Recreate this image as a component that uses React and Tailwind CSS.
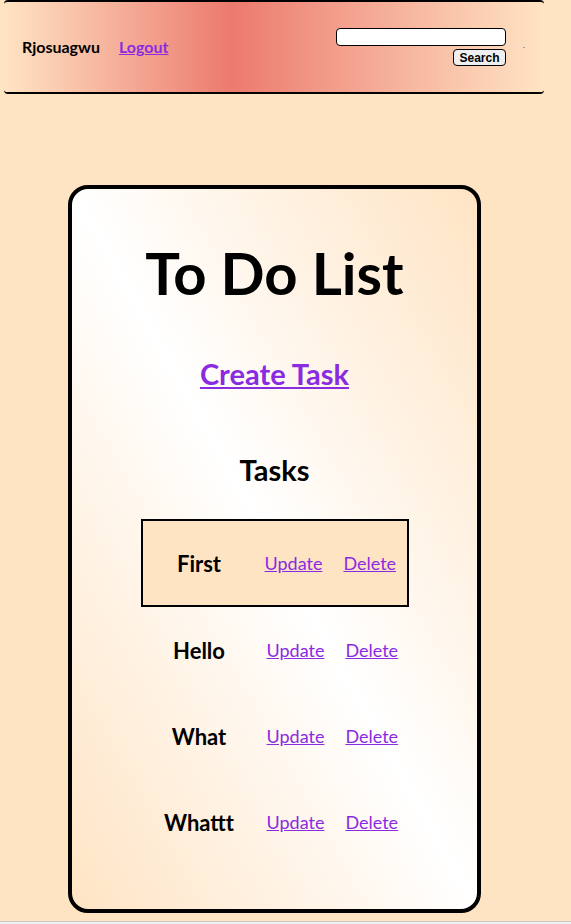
import React from 'react';

const tasks = ['First', 'Hello', 'What', 'Whattt'];

export default function App() {
    return (
        <div className="min-h-[921px] bg-[#ffe4c4] pt-0 font-['Lato','Noto_Sans',sans-serif] text-black">
            {/* top navigation bar */}
            <header className="ml-[4px] w-[540px] h-[94px] border-y-2 border-black rounded-[4px] bg-[linear-gradient(to_right,#ffe4c4,#ec7a6e_42%,#ffe4c4)] flex items-center pl-[18px]">
                <span className="text-[16px] font-bold">Rjosuagwu</span>
                <a href="#" className="ml-[19px] text-[16px] font-bold text-[#8a2be2] underline">Logout</a>
                <form className="ml-auto flex flex-col items-end gap-[3px]">
                    <input type="text" className="w-[170px] h-[18px] bg-white border border-black rounded-[4px]" />
                    <button type="button" className="h-[17px] w-[53px] bg-[#efefef] border border-black rounded-[4px] text-[12px] leading-none font-bold font-['Liberation_Sans',sans-serif]">
                        Search
                    </button>
                </form>
                <span className="ml-[17px] mr-[19px] w-[2px] h-[1px] bg-gray-400" />
            </header>

            {/* main card */}
            <main className="ml-[68px] mt-[91px] w-[413px] h-[728px] border-4 border-black rounded-[20px] bg-linear-to-bl from-[#ffe4c4] via-white to-[#ffe4c4] flex flex-col items-center pt-[46px]">
                <h1 className="text-[58px] leading-[76px] font-bold">To Do List</h1>
                <a href="#" className="mt-[45px] text-[29px] leading-[36px] font-bold text-[#8a2be2] underline">Create Task</a>
                <h2 className="mt-[60px] text-[29px] leading-[36px] font-bold">Tasks</h2>

                <div className="mt-[31px] flex flex-col">
                    {tasks.map((t, i) => (
                        <div
                            key={t}
                            className={
                                i === 0
                                    ? 'w-[268px] h-[88px] border-2 border-black bg-[#ffe4c4] flex items-center'
                                    : 'w-[268px] h-[86px] border-2 border-transparent flex items-center'
                            }
                        >
                            <span className="w-[113px] text-center text-[22px] font-bold">{t}</span>
                            <a href="#" className={(i === 0 ? 'ml-[9px]' : 'ml-[11px]') + ' text-[18px] text-[#8a2be2] underline'}>Update</a>
                            <a href="#" className="ml-[21px] text-[18px] text-[#8a2be2] underline">Delete</a>
                        </div>
                    ))}
                </div>
            </main>
            <div className="mt-[8px] h-[3px] border-t border-[#c8c8c8] bg-[#f0f0f0]" />
        </div>
    );
}
